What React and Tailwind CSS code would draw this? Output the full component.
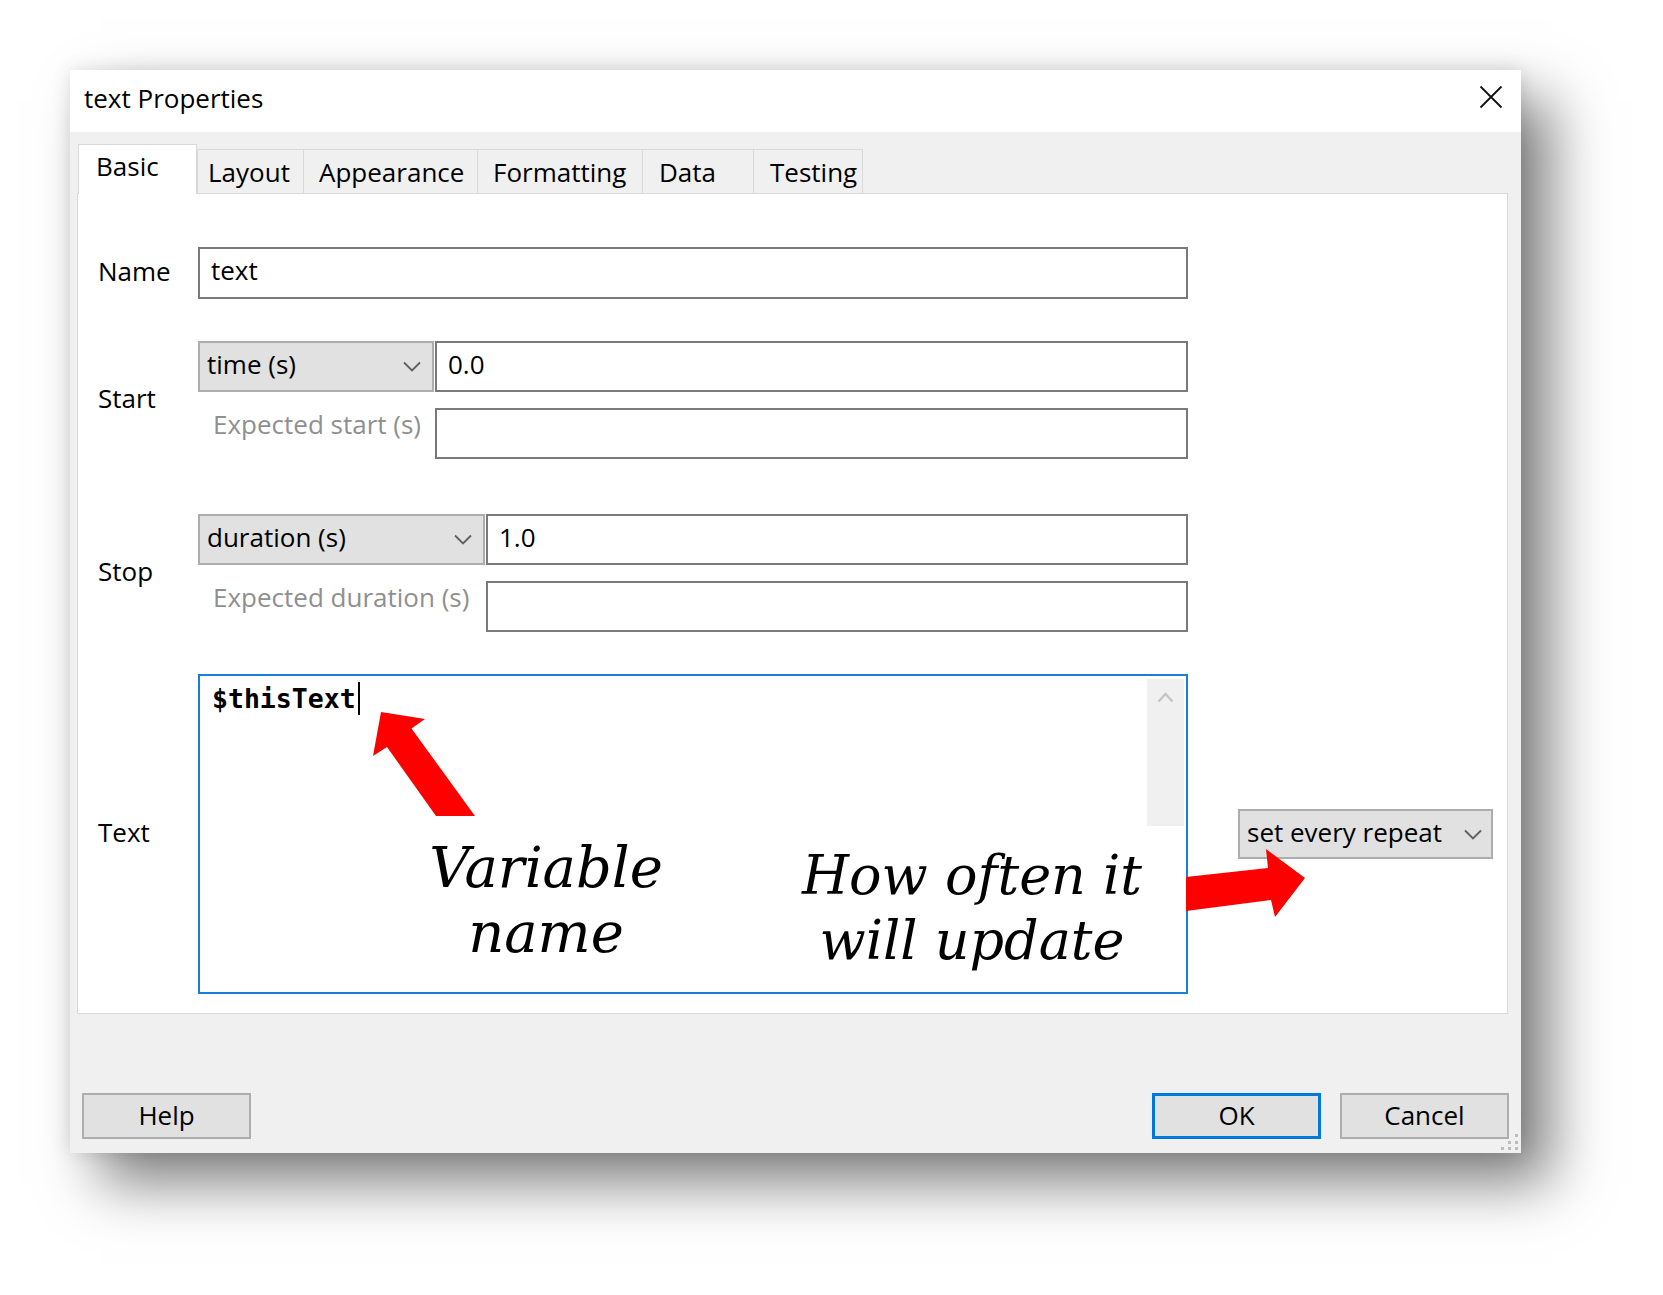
import React from 'react';

function Chevron() {
    return (
        <svg width="18" height="11" viewBox="0 0 18 11" fill="none">
            <polyline points="1,1.5 9,9.5 17,1.5" stroke="#606060" strokeWidth="1.8" />
        </svg>
    );
}

function Select({ value, width }) {
    return (
        <div className={`${width} h-full flex items-center justify-between bg-[#e1e1e1] border-2 border-[#adadad] pl-[7px] pr-[11px] pb-[5px]`}>
            <span className="leading-none">{value}</span>
            <span className="pt-[5px]"><Chevron /></span>
        </div>
    );
}

function Field({ value, className = '' }) {
    return (
        <div className={`flex-1 h-full flex items-center bg-white border-2 border-[#7a7a7a] pl-[11px] pb-[6px] ${className}`}>
            <span className="leading-none">{value}</span>
        </div>
    );
}

function Label({ children }) {
    return <div className="w-[100px] leading-none pb-[4px]">{children}</div>;
}

const tabs = [
    { name: 'Layout', w: 'w-[106px]', pl: 'pl-[10px]' },
    { name: 'Appearance', w: 'w-[174px]', pl: 'pl-[15px]' },
    { name: 'Formatting', w: 'w-[165px]', pl: 'pl-[15px]' },
    { name: 'Data', w: 'w-[111px]', pl: 'pl-[16px]' },
    { name: 'Testing', w: 'w-[110px]', pl: 'pl-[16px]' },
];

export default function App() {
    return (
        <div className="relative w-[1663px] h-[1295px] bg-white pl-[70px] pt-[70px] overflow-hidden font-['Open_Sans','Noto_Sans',sans-serif] text-[26px] text-black">
            <div className="relative flex flex-col w-[1451px] h-[1083px] bg-[#f0f0f0] shadow-[0_0_18px_rgba(0,0,0,0.12),30px_30px_55px_rgba(0,0,0,0.5)]">
                {/* title bar */}
                <div className="flex items-start justify-between h-[62px] bg-white pl-[14px] pr-[18px]">
                    <span className="leading-none pt-[15px]">text Properties</span>
                    <svg className="mt-[15px]" width="24" height="24" viewBox="0 0 24 24" fill="none">
                        <path d="M1.5 1.5 L22.5 22.5 M22.5 1.5 L1.5 22.5" stroke="#111" strokeWidth="1.8" />
                    </svg>
                </div>

                {/* tabs */}
                <div className="flex items-end h-[61px] pl-[8px]">
                    <div className="relative z-10 -mb-px w-[119px] h-[50px] bg-white border border-b-0 border-[#d9d9d9] pl-[17px] pt-[8px] leading-none">
                        Basic
                    </div>
                    {tabs.map((t, i) => (
                        <div
                            key={t.name}
                            className={`${t.w} ${t.pl} h-[44px] border-t border-l border-[#d9d9d9] pt-[9px] leading-none ${i === tabs.length - 1 ? 'border-r' : ''}`}
                        >
                            {t.name}
                        </div>
                    ))}
                </div>

                {/* panel */}
                <div className="ml-[7px] w-[1431px] h-[821px] bg-white border border-[#d9d9d9] pl-[20px] pt-[53px]">
                    <div className="flex items-center h-[52px]">
                        <Label>Name</Label>
                        <div className="w-[990px] h-full flex">
                            <Field value="text" />
                        </div>
                    </div>

                    <div className="flex items-center mt-[42px]">
                        <Label>Start</Label>
                        <div className="w-[990px] flex flex-col gap-[16px]">
                            <div className="flex h-[51px]">
                                <Select value="time (s)" width="w-[236px]" />
                                <Field value="0.0" className="ml-px" />
                            </div>
                            <div className="flex h-[51px]">
                                <div className="w-[237px] flex items-center pl-[15px] pb-[20px] text-[#8f8f8f] leading-none">Expected start (s)</div>
                                <Field value="" />
                            </div>
                        </div>
                    </div>

                    <div className="flex items-center mt-[55px]">
                        <Label>Stop</Label>
                        <div className="w-[990px] flex flex-col gap-[16px]">
                            <div className="flex h-[51px]">
                                <Select value="duration (s)" width="w-[287px]" />
                                <Field value="1.0" className="ml-px" />
                            </div>
                            <div className="flex h-[51px]">
                                <div className="w-[288px] flex items-center pl-[15px] pb-[20px] text-[#8f8f8f] leading-none">Expected duration (s)</div>
                                <Field value="" />
                            </div>
                        </div>
                    </div>

                    <div className="flex items-center mt-[42px]">
                        <Label>Text</Label>
                        <div className="relative w-[990px] h-[320px] bg-white border-2 border-[#1a7fdb] pl-[12px] pt-[3px]">
                            <span className="font-['DejaVu_Sans_Mono',monospace] font-bold text-[26.5px] leading-[26px]">$thisText</span>
                            <div className="absolute left-[158px] top-[6px] w-[2px] h-[33px] bg-black" />
                            <div className="absolute top-[3px] right-[2px] w-[37px] h-[147px] bg-[#f0f0f0] flex justify-center pt-[13px]">
                                <svg width="17" height="11" viewBox="0 0 17 11" fill="none">
                                    <polyline points="1.5,9.5 8.5,2 15.5,9.5" stroke="#c4c4c4" strokeWidth="2.4" />
                                </svg>
                            </div>
                            <div className="absolute left-[196px] top-[159px] w-[300px] text-center font-['DejaVu_Serif',serif] italic text-[56px] leading-[65px]">
                                Variable<br />name
                            </div>
                            <div className="absolute left-[572px] top-[167px] w-[400px] text-center font-['DejaVu_Serif',serif] italic text-[54px] leading-[65px]">
                                How often it<br />will update
                            </div>
                        </div>
                        <div className="ml-[50px] w-[255px] h-[50px] flex items-center justify-between bg-[#e1e1e1] border-2 border-[#adadad] pl-[7px] pr-[9px] pb-[5px]">
                            <span className="leading-none">set every repeat</span>
                            <span className="pt-[5px]"><Chevron /></span>
                        </div>
                    </div>
                </div>

                {/* buttons */}
                <div className="flex justify-between px-[12px] mt-[79px]">
                    <div className="w-[169px] h-[46px] flex items-center justify-center bg-[#e1e1e1] border-2 border-[#adadad] pb-[2px] leading-none">Help</div>
                    <div className="flex gap-[19px]">
                        <div className="w-[169px] h-[46px] flex items-center justify-center bg-[#e1e1e1] border-[3px] border-[#0078d7] pb-[2px] leading-none">OK</div>
                        <div className="w-[169px] h-[46px] flex items-center justify-center bg-[#e1e1e1] border-2 border-[#adadad] pb-[2px] leading-none">Cancel</div>
                    </div>
                </div>

                {/* resize grip */}
                <svg className="absolute right-[2px] bottom-[2px]" width="20" height="20" viewBox="0 0 20 20">
                    {[[16, 3], [9, 10], [16, 10], [2, 16], [9, 16], [16, 16]].map(([x, y]) => (
                        <rect key={`${x}-${y}`} x={x} y={y} width="3" height="3" fill="#bcbcbc" />
                    ))}
                </svg>
            </div>

            {/* annotation arrows */}
            <svg className="absolute left-0 top-0 pointer-events-none" width="1663" height="1295" viewBox="0 0 1663 1295">
                <polygon fill="#ff0000" points="381,712 425,719 411.5,728.5 475,816 436,816 387,747 373,756" />
                <polygon fill="#ff0000" points="1186,877 1268,868 1266,849 1305,878 1275,917 1271,900 1186,911" />
            </svg>
        </div>
    );
}
